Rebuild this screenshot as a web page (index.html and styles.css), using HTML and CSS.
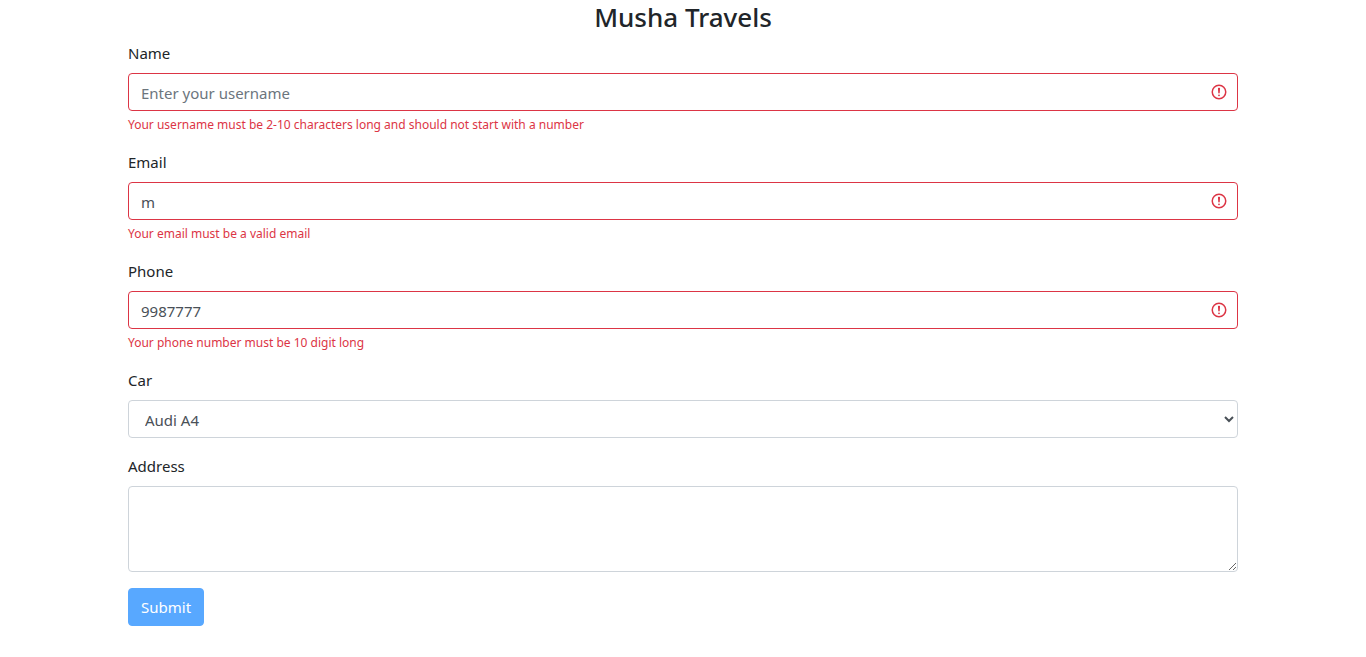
FILE: index.html
```html
<!DOCTYPE html>
<html lang="en">
<head>
<meta charset="utf-8">
<meta name="viewport" content="width=device-width, initial-scale=1">
<title>Musha Travels</title>
<link rel="stylesheet" href="styles.css">
</head>
<body>
<main class="container">
  <h1 class="title">Musha Travels</h1>
  <form novalidate>
    <div class="form-group">
      <label for="name">Name</label>
      <div class="field">
        <input class="form-control is-invalid" type="text" id="name" placeholder="Enter your username" aria-describedby="name-error">
        <svg class="alert-icon" viewBox="0 0 12 12" aria-hidden="true"><circle class="ring" cx="6" cy="6" r="4.5"/><path class="mark" d="M5.8 3.6h.4L6 6.5z"/><circle class="dot" cx="6" cy="8.2" r=".6"/></svg>
      </div>
      <small class="feedback" id="name-error">Your username must be 2-10 characters long and should not start with a number</small>
    </div>
    <div class="form-group">
      <label for="email">Email</label>
      <div class="field">
        <input class="form-control is-invalid" type="email" id="email" value="m" aria-describedby="email-error">
        <svg class="alert-icon" viewBox="0 0 12 12" aria-hidden="true"><circle class="ring" cx="6" cy="6" r="4.5"/><path class="mark" d="M5.8 3.6h.4L6 6.5z"/><circle class="dot" cx="6" cy="8.2" r=".6"/></svg>
      </div>
      <small class="feedback" id="email-error">Your email must be a valid email</small>
    </div>
    <div class="form-group">
      <label for="phone">Phone</label>
      <div class="field">
        <input class="form-control is-invalid" type="tel" id="phone" value="9987777" aria-describedby="phone-error">
        <svg class="alert-icon" viewBox="0 0 12 12" aria-hidden="true"><circle class="ring" cx="6" cy="6" r="4.5"/><path class="mark" d="M5.8 3.6h.4L6 6.5z"/><circle class="dot" cx="6" cy="8.2" r=".6"/></svg>
      </div>
      <small class="feedback" id="phone-error">Your phone number must be 10 digit long</small>
    </div>
    <div class="form-group">
      <label for="car">Car</label>
      <select class="form-control" id="car">
        <option>Audi A4</option>
      </select>
    </div>
    <div class="form-group">
      <label for="address">Address</label>
      <textarea class="form-control" id="address" rows="3"></textarea>
    </div>
    <button class="btn" type="submit" disabled>Submit</button>
  </form>
</main>
</body>
</html>
```
FILE: styles.css
```css
*, *::before, *::after {
  box-sizing: border-box;
}

body {
  margin: 0;
  background: #fff;
  color: #212529;
  font: 400 15px/24px "Segoe UI", "Noto Sans", sans-serif;
}

.container {
  max-width: 1140px;
  margin: 0 auto;
  padding: 0 15px;
}

.title {
  margin: 0 0 7px;
  font-size: 26px;
  font-weight: 500;
  line-height: 34px;
  text-align: center;
}

.form-group {
  margin-bottom: 16px;
}

label {
  display: block;
  margin-bottom: 8px;
}

.field {
  position: relative;
}

.form-control {
  display: block;
  width: 100%;
  height: 38px;
  padding: 7px 12px 5px;
  border: 1px solid #ced4da;
  border-radius: 4px;
  background-color: #fff;
  color: #495057;
  font: inherit;
}

.form-control::placeholder {
  color: #6c757d;
  opacity: 1;
}

select.form-control {
  padding-right: 1px;
}

textarea.form-control {
  height: auto;
  resize: vertical;
}

.form-control.is-invalid {
  padding-right: 38px;
  border-color: #dc3545;
}

.alert-icon {
  position: absolute;
  top: 0;
  bottom: 0;
  right: 10px;
  width: 18px;
  height: 18px;
  margin: auto 0;
  fill: none;
  stroke: #dc3545;
  pointer-events: none;
}

.mark {
  stroke-linejoin: round;
}

.dot {
  fill: #dc3545;
  stroke: none;
}

.feedback {
  display: block;
  margin-top: 5px;
  color: #dc3545;
  font-size: 12px;
  line-height: 18px;
}

.btn {
  display: block;
  padding: 6px 12px;
  border: 1px solid #007bff;
  border-radius: 4px;
  background: #007bff;
  color: #fff;
  font: inherit;
}

.btn:disabled {
  opacity: .65;
}
```
